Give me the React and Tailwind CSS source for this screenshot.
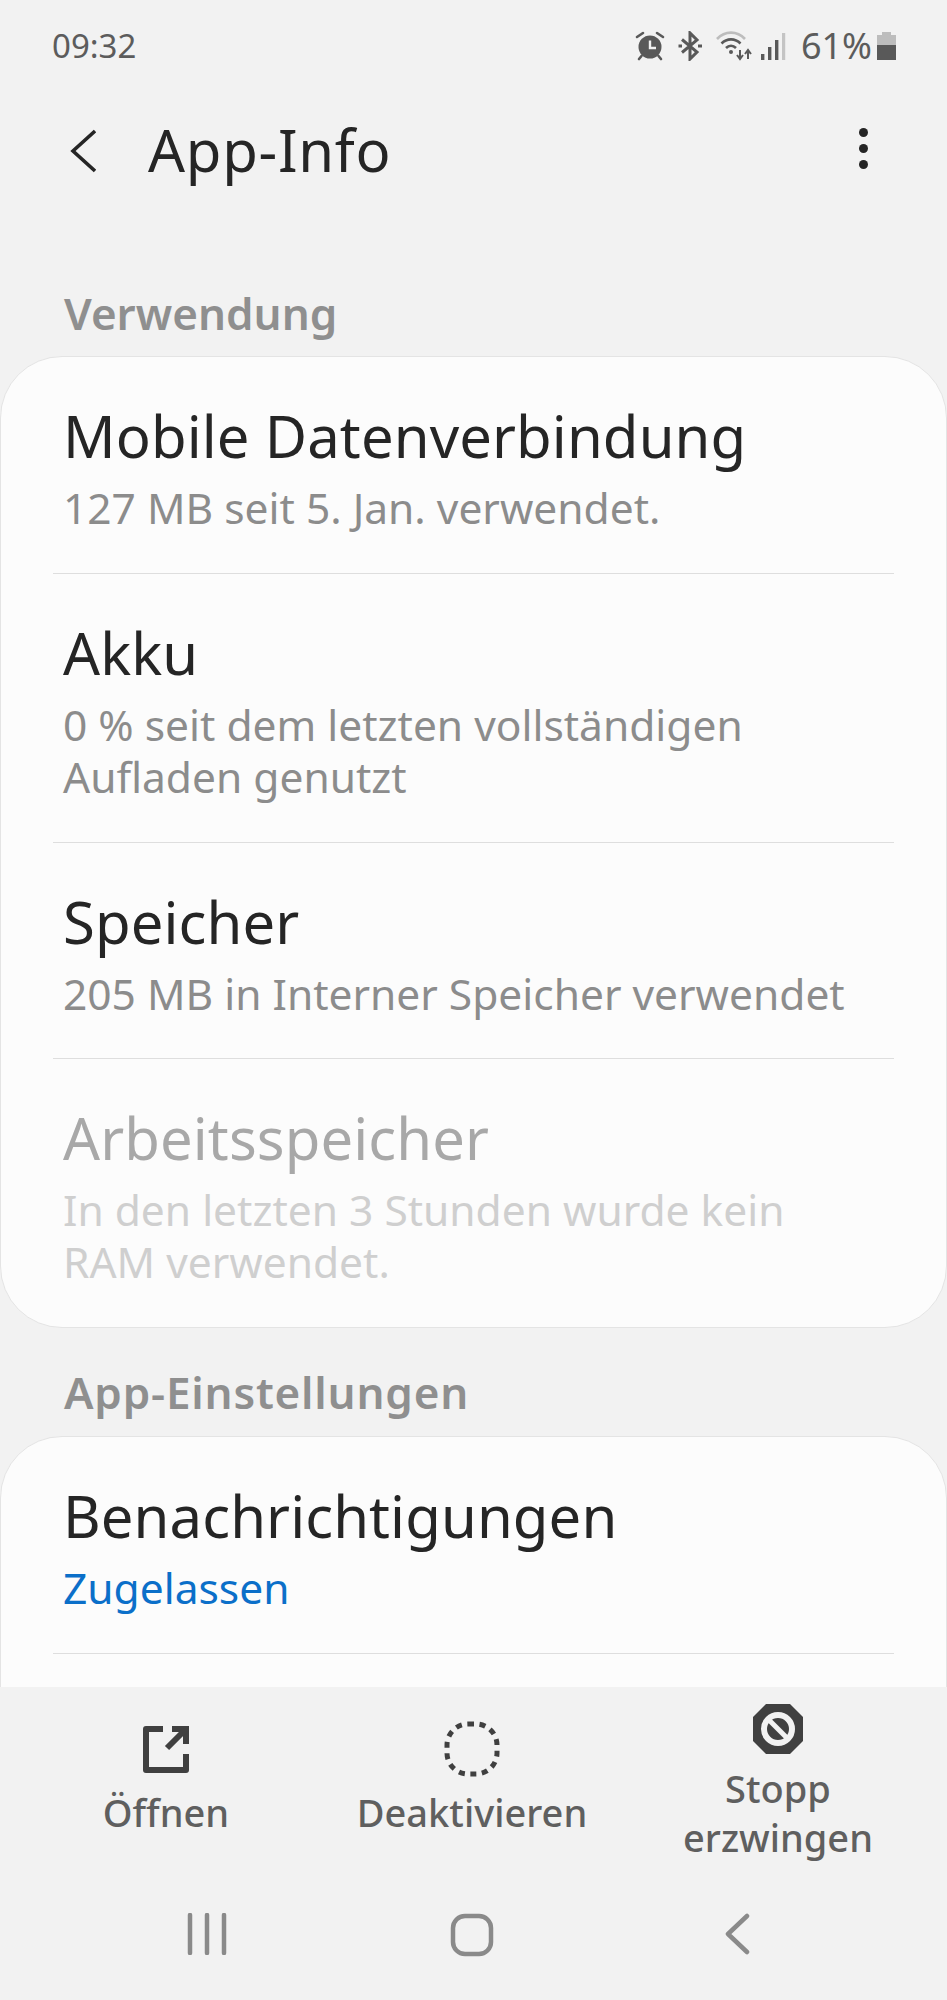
const font = { fontFamily: '"Noto Sans", sans-serif' };

function AlarmIcon() {
  return (
    <svg width="30" height="30" viewBox="0 0 30 30" fill="none">
      <circle cx="15" cy="16" r="11.5" fill="#595959" />
      <path d="M15 9.5V17H21" stroke="#f2f2f2" strokeWidth="2.4" fill="none" />
      <path d="M2 6L8 2M28 6L22 2M6.5 25L4 28M23.5 25L26 28" stroke="#595959" strokeWidth="2.6" strokeLinecap="round" />
    </svg>
  );
}

function BluetoothIcon() {
  return (
    <svg width="28" height="30" viewBox="0 0 28 30" fill="none">
      <path d="M6 8.5L21 21L14 28V2L21 9L6 21.5" stroke="#595959" strokeWidth="3" />
      <path d="M2.5 15H6M22 15H26" stroke="#595959" strokeWidth="3.2" />
    </svg>
  );
}

function WifiIcon() {
  return (
    <svg width="38" height="30" viewBox="0 0 38 30" fill="none">
      <path d="M1 8C9 -0.5 21 -0.5 29 8" stroke="#bdbdbd" strokeWidth="2.6" />
      <path d="M5.5 12.5C11 7 19 7 24.5 12.5" stroke="#595959" strokeWidth="2.6" />
      <path d="M10 17C13 14 17 14 20 17" stroke="#595959" strokeWidth="2.6" />
      <circle cx="15" cy="21" r="2" fill="#595959" />
      <path d="M24 19V27M21 24L24 28L27 24M32 28V20M29 23L32 19L35 23" stroke="#595959" strokeWidth="2" />
    </svg>
  );
}

function SignalIcon() {
  return (
    <svg width="26" height="30" viewBox="0 0 26 30">
      <rect x="1" y="23" width="3.4" height="6" fill="#595959" />
      <rect x="8" y="16" width="3.4" height="13" fill="#595959" />
      <rect x="15" y="9" width="3.4" height="20" fill="#595959" />
      <rect x="22" y="2" width="3.2" height="27" fill="#c4c4c4" />
    </svg>
  );
}

function BatteryIcon() {
  return (
    <svg width="19" height="28" viewBox="0 0 19 28">
      <rect x="5" y="0" width="9" height="3" fill="#bdbdbd" />
      <rect x="0" y="3" width="19" height="10" fill="#bdbdbd" />
      <rect x="0" y="13" width="19" height="15" fill="#595959" />
    </svg>
  );
}

function OpenIcon() {
  return (
    <svg width="46" height="47" viewBox="0 0 46 47" fill="none">
      <path d="M20 3H3V44H43V28" stroke="#404040" strokeWidth="6" strokeLinejoin="round" />
      <path d="M29 3H43V18" stroke="#404040" strokeWidth="6" />
      <path d="M42 4L24 22" stroke="#404040" strokeWidth="6" />
    </svg>
  );
}

function DottedCircle() {
  return (
    <svg width="56" height="56" viewBox="0 0 56 56" fill="none">
      <rect x="3" y="3" width="50" height="50" rx="21" stroke="#404040" strokeWidth="5" strokeDasharray="6 5.6" />
    </svg>
  );
}

function StopIcon() {
  return (
    <svg width="52" height="52" viewBox="0 0 52 52" fill="none">
      <path d="M14 1H38L51 14V38L38 51H14L1 38V14Z" fill="#404040" />
      <circle cx="26" cy="26" r="14" stroke="#f2f2f2" strokeWidth="6" />
      <path d="M16 16L36 36" stroke="#f2f2f2" strokeWidth="5" />
    </svg>
  );
}

function Row({ title, children, disabled, height, noBorder }) {
  return (
    <div className={`mx-[52px] pl-[10px] pt-[41px] ${height} ${noBorder ? "" : "border-b border-[#dedede]"}`}>
      <div className={`text-[58px] leading-[76px] tracking-[0.1px] ${disabled ? "text-[#a8a8a8]" : "text-[#252525]"}`}>{title}</div>
      <div className={`mt-[8px] text-[42.5px] leading-[52px] ${disabled ? "text-[#cfcfcf]" : "text-[#8c8c8c]"}`}>{children}</div>
    </div>
  );
}

function Action({ icon, iconBox, gap, shift, children }) {
  return (
    <div className={`flex flex-1 flex-col items-center justify-center ${shift}`}>
      <div className={`flex items-center ${iconBox}`}>{icon}</div>
      <div className={`${gap} text-center text-[38px] font-medium leading-[49px] text-[#5f5f5f]`}>{children}</div>
    </div>
  );
}

export default function App() {
  return (
    <div style={font} className="flex h-[2000px] w-[947px] flex-col overflow-hidden bg-[#f2f2f2]">
      <div className="flex h-[92px] shrink-0 items-center justify-between pl-[52px] pr-[51px]">
        <span className="text-[33px] text-[#5c5c5c]">09:32</span>
        <div className="flex items-center">
          <AlarmIcon />
          <div className="ml-[11px]"><BluetoothIcon /></div>
          <div className="ml-[12px]"><WifiIcon /></div>
          <div className="ml-[6px]"><SignalIcon /></div>
          <span className="ml-[15px] text-[36px] text-[#5c5c5c]">61%</span>
          <div className="ml-[5px]"><BatteryIcon /></div>
        </div>
      </div>

      <div className="flex h-[118px] shrink-0 items-center pl-[70px] pr-[79px]">
        <svg width="26" height="44" viewBox="0 0 26 44" fill="none">
          <path d="M25 2L3 22L25 42" stroke="#252525" strokeWidth="3.6" />
        </svg>
        <span className="mb-[2px] ml-[52px] text-[58px] leading-[76px] tracking-[0.7px] text-[#252525]">App-Info</span>
        <div className="mb-[5px] ml-auto flex flex-col gap-[6.5px]">
          <span className="h-[9.5px] w-[9.5px] rounded-full bg-[#252525]" />
          <span className="h-[9.5px] w-[9.5px] rounded-full bg-[#252525]" />
          <span className="h-[9.5px] w-[9.5px] rounded-full bg-[#252525]" />
        </div>
      </div>

      <div className="min-h-0 flex-1 overflow-hidden">
        <div className="mt-[74px] pl-[64px] text-[44px] font-semibold leading-[58px] text-[#8f8f8f]">Verwendung</div>
        <div className="mt-[14px] rounded-[62px] border border-[#e4e4e4] bg-[#fcfcfc]">
          <Row title="Mobile Datenverbindung" height="h-[217px]">127 MB seit 5. Jan. verwendet.</Row>
          <Row title="Akku" height="h-[269px]">0 % seit dem letzten vollständigen<br />Aufladen genutzt</Row>
          <Row title="Speicher" height="h-[216px]">205 MB in Interner Speicher verwendet</Row>
          <Row title="Arbeitsspeicher" disabled height="h-[268px]" noBorder>In den letzten 3 Stunden wurde kein<br />RAM verwendet.</Row>
        </div>
        <div className="mt-[35px] pl-[64px] text-[44px] font-semibold leading-[58px] tracking-[0.8px] text-[#8f8f8f]">App-Einstellungen</div>
        <div className="mt-[15px] rounded-t-[62px] border border-[#e4e4e4] bg-[#fcfcfc] pb-[60px]">
          <Row title="Benachrichtigungen" height="h-[217px]"><span className="text-[#0b6fc9]">Zugelassen</span></Row>
        </div>
      </div>

      <div className="flex h-[193px] shrink-0 bg-[#f2f2f2] pl-[13px] pr-[16px]">
        <Action icon={<OpenIcon />} iconBox="h-[56px]" gap="mt-[11px]" shift="pb-[9px]">Öffnen</Action>
        <Action icon={<DottedCircle />} iconBox="h-[56px]" gap="mt-[11px]" shift="pb-[9px]">Deaktivieren</Action>
        <Action icon={<StopIcon />} iconBox="h-[52px]" gap="mt-[9px]" shift="pb-[2px]">Stopp<br />erzwingen</Action>
      </div>

      <div className="flex h-[120px] shrink-0 items-start pl-[75px] pr-[78px] pt-[33px]">
        <div className="flex flex-1 justify-center">
          <svg width="40" height="42" viewBox="0 0 40 42" fill="none">
            <path d="M3 2V40M20 2V40M37 2V40" stroke="#8a8a8a" strokeWidth="4.5" strokeLinecap="round" />
          </svg>
        </div>
        <div className="flex flex-1 justify-center">
          <svg width="44" height="44" viewBox="0 0 44 44" fill="none">
            <rect x="3" y="3" width="38" height="38" rx="12" stroke="#8a8a8a" strokeWidth="4.5" />
          </svg>
        </div>
        <div className="flex flex-1 justify-center">
          <svg width="28" height="42" viewBox="0 0 28 42" fill="none">
            <path d="M24 3L5 21L24 39" stroke="#8a8a8a" strokeWidth="4.5" strokeLinecap="round" strokeLinejoin="round" />
          </svg>
        </div>
      </div>
    </div>
  );
}
